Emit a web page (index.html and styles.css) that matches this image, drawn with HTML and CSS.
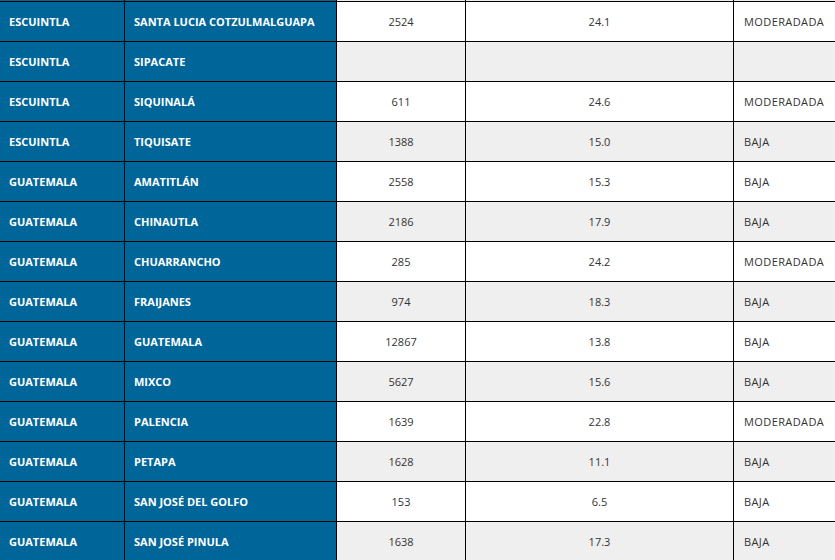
FILE: index.html
```html
<!DOCTYPE html>
<html lang="es">
<head>
<meta charset="utf-8">
<title>Municipios</title>
<link rel="stylesheet" href="styles.css">
</head>
<body>
<div class="viewport">
<table class="data">
<colgroup>
<col class="c-dep"><col class="c-mun"><col class="c-num"><col class="c-rate"><col class="c-level">
</colgroup>
<tbody>
<tr class="alt"><td class="key"></td><td class="key"></td><td class="num"></td><td class="num"></td><td class="level"></td></tr>
<tr><td class="key">ESCUINTLA</td><td class="key">SANTA LUCIA COTZULMALGUAPA</td><td class="num">2524</td><td class="num">24.1</td><td class="level">MODERADADA</td></tr>
<tr class="alt"><td class="key">ESCUINTLA</td><td class="key">SIPACATE</td><td class="num"></td><td class="num"></td><td class="level"></td></tr>
<tr><td class="key">ESCUINTLA</td><td class="key">SIQUINALÁ</td><td class="num">611</td><td class="num">24.6</td><td class="level">MODERADADA</td></tr>
<tr class="alt"><td class="key">ESCUINTLA</td><td class="key">TIQUISATE</td><td class="num">1388</td><td class="num">15.0</td><td class="level">BAJA</td></tr>
<tr><td class="key">GUATEMALA</td><td class="key">AMATITLÁN</td><td class="num">2558</td><td class="num">15.3</td><td class="level">BAJA</td></tr>
<tr class="alt"><td class="key">GUATEMALA</td><td class="key">CHINAUTLA</td><td class="num">2186</td><td class="num">17.9</td><td class="level">BAJA</td></tr>
<tr><td class="key">GUATEMALA</td><td class="key">CHUARRANCHO</td><td class="num">285</td><td class="num">24.2</td><td class="level">MODERADADA</td></tr>
<tr class="alt"><td class="key">GUATEMALA</td><td class="key">FRAIJANES</td><td class="num">974</td><td class="num">18.3</td><td class="level">BAJA</td></tr>
<tr><td class="key">GUATEMALA</td><td class="key">GUATEMALA</td><td class="num">12867</td><td class="num">13.8</td><td class="level">BAJA</td></tr>
<tr class="alt"><td class="key">GUATEMALA</td><td class="key">MIXCO</td><td class="num">5627</td><td class="num">15.6</td><td class="level">BAJA</td></tr>
<tr><td class="key">GUATEMALA</td><td class="key">PALENCIA</td><td class="num">1639</td><td class="num">22.8</td><td class="level">MODERADADA</td></tr>
<tr class="alt"><td class="key">GUATEMALA</td><td class="key">PETAPA</td><td class="num">1628</td><td class="num">11.1</td><td class="level">BAJA</td></tr>
<tr><td class="key">GUATEMALA</td><td class="key">SAN JOSÉ DEL GOLFO</td><td class="num">153</td><td class="num">6.5</td><td class="level">BAJA</td></tr>
<tr class="alt"><td class="key">GUATEMALA</td><td class="key">SAN JOSÉ PINULA</td><td class="num">1638</td><td class="num">17.3</td><td class="level">BAJA</td></tr>
</tbody>
</table>
</div>
</body>
</html>
```
FILE: styles.css
```css
html, body {
  margin: 0;
  padding: 0;
  background: #ffffff;
}

.viewport {
  width: 835px;
  height: 560px;
  overflow: hidden;
}

.data {
  border-collapse: collapse;
  table-layout: fixed;
  width: 1000px;
  margin-top: -39px;
  margin-left: -1px;
  font-family: "Open Sans", "Liberation Sans", sans-serif;
  font-size: 11px;
  color: #333333;
}

.c-dep { width: 125px; }
.c-mun { width: 212px; }
.c-num { width: 129px; }
.c-rate { width: 268px; }
.c-level { width: 266px; }

.data td {
  border: 1px solid #000000;
  height: 39px;
  padding: 0 9px;
  white-space: nowrap;
  vertical-align: middle;
  background: #ffffff;
}

.data tr.alt td {
  background: #efefef;
}

.data td.key,
.data tr.alt td.key {
  background: #006699;
  color: #ffffff;
  font-weight: 700;
}

.data td.num {
  text-align: center;
}

.data td.level {
  letter-spacing: 0.4px;
  padding-left: 10px;
}
```
